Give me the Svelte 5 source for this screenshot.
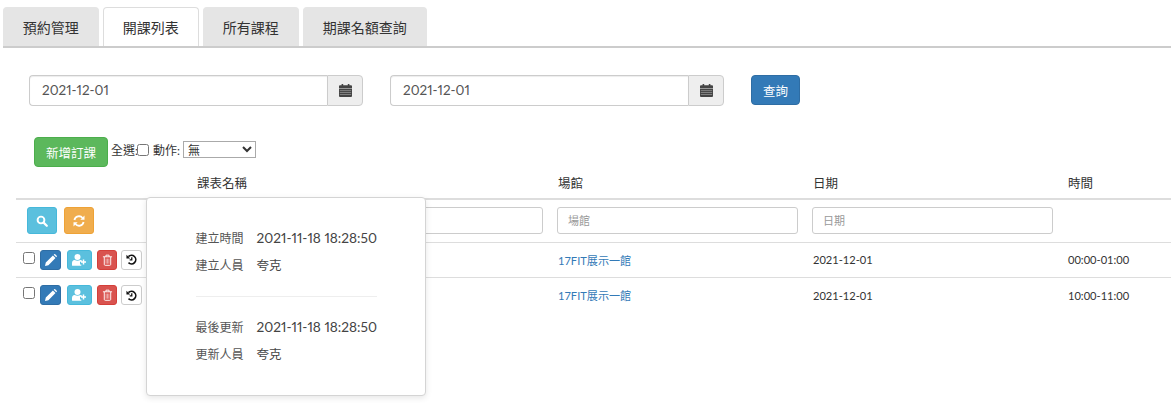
<script lang="ts">
    const tabs = ['預約管理', '開課列表', '所有課程', '期課名額查詢'];
    const rows = [
        { venue: '17FIT展示一館', date: '2021-12-01', time: '00:00-01:00' },
        { venue: '17FIT展示一館', date: '2021-12-01', time: '10:00-11:00' }
    ];
    const meta = [
        [['建立時間', '2021-11-18 18:28:50'], ['建立人員', '夸克']],
        [['最後更新', '2021-11-18 18:28:50'], ['更新人員', '夸克']]
    ];
</script>

{#snippet calendar()}
    <svg class="cal" viewBox="0 0 13 13" width="13" height="13" aria-hidden="true">
        <path d="M0 2.2q0-1 1-1h1.6V0h1.6v1.2h4.6V0h1.6v1.2H12q1 0 1 1V4H0z" fill="#444" />
        <path d="M0 4.6h13V12q0 1-1 1H1q-1 0-1-1z" fill="#444" />
        <path d="M.8 6.6h11.400M.8 8.500h11.400M.8 10.500h11.400" stroke="#aaa" stroke-width=".6" fill="none" />
    </svg>
{/snippet}

<main>
    <nav class="tabs">
        {#each tabs as tab, i}
            <button class="tab" class:active={i === 1}>{tab}</button>
        {/each}
    </nav>

    <form class="search" onsubmit={(e) => e.preventDefault()}>
        <div class="date-group">
            <input type="text" value="2021-12-01" />
            <span class="addon">{@render calendar()}</span>
        </div>
        <div class="date-group">
            <input type="text" value="2021-12-01" />
            <span class="addon">{@render calendar()}</span>
        </div>
        <button class="query">查詢</button>
    </form>

    <div class="toolbar">
        <button class="add">新增訂課</button>
        <label class="all">全選:<input type="checkbox" /></label>
        <label class="action">動作:
            <select>
                <option>無</option>
            </select>
        </label>
    </div>

    <div class="table-wrap">
        <table>
            <colgroup>
                <col style="width: 173px" />
                <col style="width: 360px" />
                <col style="width: 255px" />
                <col style="width: 255px" />
                <col style="width: 112px" />
            </colgroup>
            <thead>
                <tr>
                    <th></th>
                    <th>課表名稱</th>
                    <th>場館</th>
                    <th>日期</th>
                    <th>時間</th>
                </tr>
            </thead>
            <tbody>
                <tr class="filter">
                    <td class="filter-actions">
                        <button class="icon-btn big info" aria-label="search">
                            <svg viewBox="0 0 12 12" width="12" height="12"><circle cx="5" cy="5" r="3.4" fill="none" stroke="#fff" stroke-width="1.9" /><path d="M7.600 7.600l3.200 3.200" stroke="#fff" stroke-width="2.200" stroke-linecap="round" /></svg>
                        </button>
                        <button class="icon-btn big warning" aria-label="reset">
                            <svg viewBox="0 0 12 12" width="12" height="12"><path d="M1.400 5A4.700 4.700 0 0 1 9.600 3M10.600 7A4.700 4.700 0 0 1 2.400 9" fill="none" stroke="#fff" stroke-width="1.800" /><path d="M11.500 .6v4.200H7.300zM.5 11.400V7.200h4.200z" fill="#fff" /></svg>
                        </button>
                    </td>
                    <td><input class="filter-input name" placeholder="課表名稱" /></td>
                    <td><input class="filter-input" placeholder="場館" /></td>
                    <td><input class="filter-input" placeholder="日期" /></td>
                    <td></td>
                </tr>
                {#each rows as row}
                    <tr class="row">
                        <td class="row-actions">
                            <input type="checkbox" />
                            <button class="icon-btn primary" aria-label="edit">
                                <svg viewBox="0 0 12 12" width="12" height="12"><path d="M0 12l.8-3.400L7.900 1.500l2.600 2.600-7.100 7.100zM8.700 .7l.5-.4q.5-.4 1 0l1.500 1.500q.4.5 0 1l-.4.5z" fill="#fff" /></svg>
                            </button>
                            <button class="icon-btn info wide" aria-label="add member">
                                <svg viewBox="0 0 15 12" width="15" height="12"><circle cx="5.500" cy="3" r="3" fill="#fff" /><path d="M0 11.300V9q0-2.800 2.600-3.100Q5.500 7.500 8.400 5.900q1 .1 1.700.8v1.100H8v2.600h1.300v1.400H.6q-.6 0-.6-.5z" fill="#fff" /><path d="M11.500 5.500v5M9 8h5" stroke="#fff" stroke-width="1.500" /></svg>
                            </button>
                            <button class="icon-btn danger" aria-label="delete">
                                <svg viewBox="0 0 12 13" width="11" height="12"><path d="M1 3h10M2.500 3v8.300q0 1 1 1h5q1 0 1-1V3M4.300 3V1.200h3.400V3" fill="none" stroke="#fff" /><path d="M4.500 5v5.500M6 5v5.500M7.500 5v5.500" stroke="#f7d6d5" stroke-width=".7" /></svg>
                            </button>
                            <button class="icon-btn plain" aria-label="history">
                                <svg viewBox="0 0 12 12" width="11" height="11"><path d="M2.600 2.800A4.700 4.700 0 1 1 2.700 9.500" fill="none" stroke="#111" stroke-width="1.800" /><path d="M.5 .9v4.100h4.100z" fill="#111" /><path d="M6.300 3.500v3H4" fill="none" stroke="#111" stroke-width="1.400" /></svg>
                            </button>
                        </td>
                        <td></td>
                        <td class="venue"><a href="#venue">{row.venue}</a></td>
                        <td>{row.date}</td>
                        <td>{row.time}</td>
                    </tr>
                {/each}
            </tbody>
        </table>

        <div class="popover">
            {#each meta as group, g}
                {#if g > 0}<hr />{/if}
                {#each group as [label, value]}
                    <div class="meta-row">
                        <span class="label">{label}</span>
                        <span class="value" class:person={value.length < 5}>{value}</span>
                    </div>
                {/each}
            {/each}
        </div>
    </div>
</main>

<style>
    :global(body) {
        margin: 0;
        background: #fff;
        overflow: hidden;
    }
    main {
        height: 403px;
        overflow: hidden;
        font-family: Lato, "Noto Sans CJK TC", sans-serif;
        font-size: 14px;
        color: #333;
    }
    button {
        font-family: inherit;
        cursor: pointer;
    }
    .tabs {
        display: flex;
        gap: 4.500px;
        margin-left: 3px;
        padding-top: 7px;
        border-bottom: 2px solid #ccc;
        height: 39px;
    }
    .tab {
        height: 39px;
        padding: 0 18.750px;
        border: 1px solid #e5e5e5;
        border-bottom: none;
        border-radius: 4px 4px 0 0;
        background: #e5e5e5;
        color: #333;
        font-size: 14px;
    }
    .tab.active {
        background: #fff;
        border-color: #ddd;
    }
    .search {
        display: flex;
        align-items: flex-start;
        gap: 27px;
        margin: 27px 0 0 29px;
    }
    .date-group {
        display: flex;
        width: 334px;
        height: 31px;
    }
    .date-group input {
        flex: 1;
        min-width: 0;
        box-sizing: border-box;
        padding: 0 12px 2px;
        border: 1px solid #ccc;
        border-right: none;
        border-radius: 4px 0 0 4px;
        font: inherit;
        font-size: 13.500px;
        font-variant-numeric: proportional-nums;
        color: #555;
        box-shadow: inset 0 1px 1px rgba(0, 0, 0, .075);
    }
    .addon {
        display: flex;
        align-items: center;
        justify-content: center;
        box-sizing: border-box;
        width: 36px;
        border: 1px solid #ccc;
        border-radius: 0 4px 4px 0;
        background: #eee;
    }
    .query {
        height: 30px;
        width: 49px;
        padding: 0;
        border: 1px solid #2e6da4;
        border-radius: 4px;
        background: #337ab7;
        color: #fff;
        font-size: 12.500px;
    }
    .toolbar {
        display: flex;
        align-items: flex-start;
        margin: 31px 0 0 34px;
        height: 31px;
        font-size: 12px;
    }
    .add {
        height: 30px;
        width: 74px;
        padding: 0;
        border: 1px solid #4cae4c;
        border-radius: 4px;
        background: #5cb85c;
        color: #fff;
        font-size: 12.500px;
    }
    .all {
        display: flex;
        align-items: center;
        margin: 4px 0 0 3px;
        height: 17px;
    }
    .all input {
        margin: 0 0 0 -1px;
        width: 12px;
        height: 12px;
    }
    .action {
        display: flex;
        align-items: center;
        gap: 3px;
        margin: 4px 0 0 4px;
        height: 17px;
    }
    .action select {
        width: 73px;
        height: 17px;
        padding: 0;
        font-family: inherit;
        font-size: 12px;
        background: #fff;
        border: 1px solid #aaa;
        color: #333;
    }
    .table-wrap {
        position: relative;
        margin-left: 16px;
    }
    table {
        width: 1155px;
        table-layout: fixed;
        border-collapse: collapse;
        font-size: 11.100px;
    }
    th {
        height: 31px;
        padding: 0 8px 1px 9px;
        box-sizing: border-box;
        border-bottom: 2px solid #ddd;
        text-align: left;
        font-size: 12.500px;
        font-weight: 400;
        color: #333;
    }
    th:nth-child(2) {
        padding-left: 8px;
    }
    td {
        padding: 0 8px;
        border-bottom: 1px solid #ddd;
    }
    .filter td {
        height: 43px;
        box-sizing: border-box;
    }
    .filter-actions {
        padding-left: 11px;
    }
    .filter-input {
        display: block;
        box-sizing: border-box;
        width: 241px;
        height: 27px;
        margin-left: 0;
        padding: 0 10px;
        border: 1px solid #ccc;
        border-radius: 3px;
        font: inherit;
        font-size: 11px;
    }
    .filter-input.name {
        width: 346px;
    }
    .filter-input::placeholder {
        color: #999;
    }
    .row td {
        height: 35px;
        box-sizing: border-box;
    }
    .row:last-child td {
        border-bottom: none;
    }
    .row td.venue {
        padding-left: 9px;
    }
    .row td:nth-child(4), .row td:nth-child(5) {
        padding-left: 9px;
    }
    .row a {
        color: #337ab7;
        text-decoration: none;
    }
    .row-actions {
        display: flex;
        align-items: center;
        gap: 5px;
        padding-left: 7px;
    }
    .row-actions input {
        margin: -4px 0 0 0;
        width: 12px;
        height: 12px;
    }
    .icon-btn {
        display: inline-flex;
        align-items: center;
        justify-content: center;
        box-sizing: border-box;
        width: 21px;
        height: 20px;
        padding: 0;
        border: 1px solid transparent;
        border-radius: 3px;
        vertical-align: middle;
    }
    .icon-btn.big {
        width: 30px;
        height: 27px;
        margin-right: 4px;
    }
    .icon-btn.wide {
        width: 25px;
    }
    .primary {
        background: #337ab7;
        border-color: #2e6da4;
        margin-right: 1px;
    }
    .info {
        background: #5bc0de;
        border-color: #46b8da;
    }
    .warning {
        background: #f0ad4e;
        border-color: #eea236;
    }
    .danger {
        width: 20px;
        margin-right: -1px;
        background: #d9534f;
        border-color: #d43f3a;
    }
    .plain {
        background: #fff;
        border-color: #ccc;
    }
    .popover {
        position: absolute;
        left: 129.500px;
        top: 29px;
        box-sizing: border-box;
        width: 280.500px;
        height: 199px;
        padding: 26px 49px;
        background: #fff;
        border: 1px solid #d4d4d4;
        border-radius: 4px;
        box-shadow: 0 2px 6px rgba(0, 0, 0, .1);
        font-size: 12px;
        color: #444;
    }
    .meta-row {
        display: flex;
        align-items: center;
        height: 27px;
        white-space: nowrap;
    }
    .value {
        font-size: 13.700px;
        font-variant-numeric: proportional-nums;
    }
    .value.person {
        font-size: 12.500px;
    }
    .label {
        width: 61px;
        flex: none;
        color: #555;
    }
    hr {
        width: 181px;
        margin: 18px 0 16px;
        border: none;
        border-top: 1px solid #eee;
    }
</style>
